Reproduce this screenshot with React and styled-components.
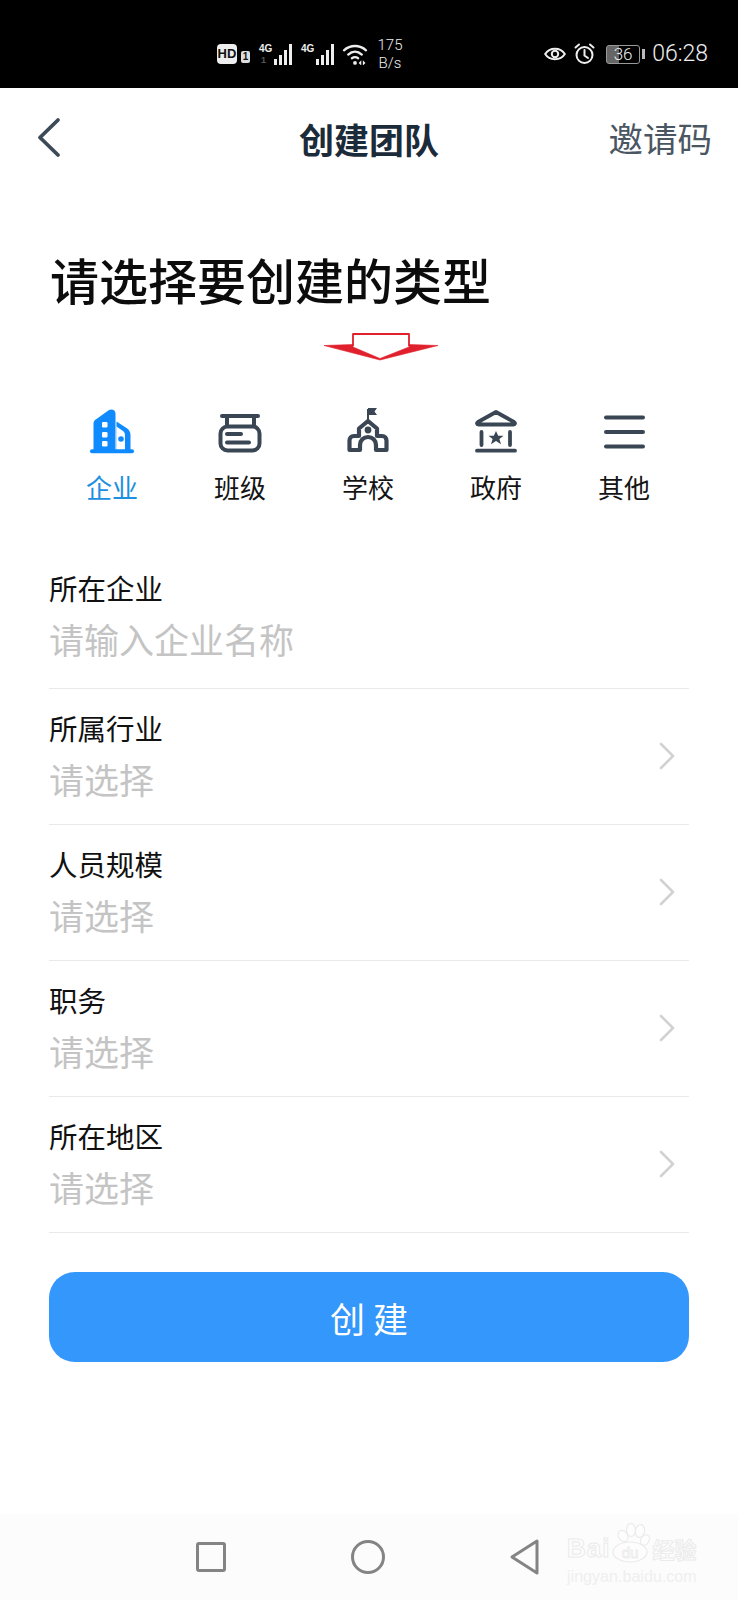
import React from 'react';
import styled, { createGlobalStyle } from 'styled-components';

const Global = createGlobalStyle`
  html, body { margin: 0; padding: 0; background: #fff; }
  body { font-family: "Noto Sans CJK SC", "Liberation Sans", sans-serif; }
`;

const types = [
  { key: 'company', label: '企业', active: true },
  { key: 'class', label: '班级' },
  { key: 'school', label: '学校' },
  { key: 'gov', label: '政府' },
  { key: 'other', label: '其他' },
];

const rows = ['所属行业', '人员规模', '职务', '所在地区'];

function TypeIcon({ name }) {
  if (name === 'company') {
    return (
      <svg width="48" height="48" viewBox="0 0 48 48">
        <path fill="#0f8bff" d="M5.500 44V16.500c0-2 1-3.500 3-4.500L21 3c3-1.500 6.500 0 6.500 3.500V44z" />
        <path fill="#0f8bff" d="M28.500 14.500L38.500 21c2.500 1.500 4 4 4 7V44H28.500z" />
        <path fill="#fff" d="M28.500 19.500L35 24c1.300.9 2 2.500 2 4.500V43H28.500z" />
        <rect x="2" y="42.200" width="44" height="4" rx="2" fill="#0f8bff" />
        <rect x="14" y="15" width="5.500" height="5.500" rx="1.200" fill="#fff" />
        <rect x="14" y="25" width="5.500" height="5.500" rx="1.200" fill="#fff" />
        <rect x="14" y="34" width="5.500" height="5.500" rx="1.200" fill="#fff" />
        <circle cx="33" cy="32" r="2.800" fill="#0f8bff" />
      </svg>
    );
  }
  if (name === 'class') {
    return (
      <svg width="48" height="48" viewBox="0 0 48 48" fill="none" stroke="#3a4654" strokeWidth="4" strokeLinecap="round">
        <path d="M6 9h36" />
        <path d="M11 9v10M38 9v10" />
        <rect x="4.500" y="19.500" width="39" height="24" rx="7" />
        <path d="M11 27h14M11 35.500h22" />
      </svg>
    );
  }
  if (name === 'school') {
    return (
      <svg width="48" height="48" viewBox="0 0 48 48" fill="none" stroke="#3a4654" strokeWidth="4.200" strokeLinejoin="round">
        <path d="M24 14L15 21.500V29H10c-3 0-4.500 2-4.500 4.500V43H16V38c0-4.500 3.500-8 8-8s8 3.500 8 8v5h10.500V33.500c0-2.500-1.500-4.500-4.500-4.500h-5V21.500z" />
        <path d="M24 14V2" strokeWidth="2" />
        <path fill="#3a4654" stroke="none" d="M24 1h9l-2.500 3.500L33 8h-9z" />
        <circle cx="24" cy="23" r="3.400" fill="#3a4654" stroke="none" />
      </svg>
    );
  }
  if (name === 'gov') {
    return (
      <svg width="48" height="48" viewBox="0 0 48 48" fill="none" stroke="#3a4654" strokeWidth="3.800" strokeLinecap="round" strokeLinejoin="round">
        <path d="M24 5L6 15c-1.500 1-1.200 2.500.5 2.500h35c1.700 0 2-1.500.5-2.500z" />
        <path d="M9.500 25v13M38 25v13M5 43.700h38" />
        <path fill="#3a4654" stroke="none" d="M24 24l2.200 4.700h5.300l-4.100 3.300 1.600 5.300-5-3.200-5 3.200 1.600-5.300-4.100-3.300h5.300z" />
      </svg>
    );
  }
  return (
    <svg width="48" height="48" viewBox="0 0 48 48" fill="none" stroke="#3a4654" strokeWidth="4" strokeLinecap="round">
      <path d="M6 10.500h37M6 25h37M6 39.500h37" />
    </svg>
  );
}

function Signal({ secondary }) {
  return (
    <SignalWrap>
      <SignalTag>4G</SignalTag>
      {secondary && <SignalSub>1</SignalSub>}
      <SignalBars>
        {[6, 10, 15, 21].map((h) => (
          <SignalBar key={h} style={{ height: h }} />
        ))}
      </SignalBars>
    </SignalWrap>
  );
}

export default function App() {
  return (
    <Page>
      <Global />
      <StatusBar>
        <StatusLeft>
          <HdBadge>HD</HdBadge>
          <SimBadge>1</SimBadge>
          <Signal secondary />
          <Signal />
          <svg width="26" height="22" viewBox="0 0 24 21" fill="none" stroke="#eee" strokeWidth="2.200" strokeLinecap="round">
            <path d="M1.500 7c6-5.500 15-5.500 21 0M5.500 11c4-3.500 9-3.500 13 0M9 14.500c2-1.300 4-1.300 6 0" />
            <circle cx="12" cy="19" r="1.800" fill="#eee" stroke="none" />
            <path fill="#eee" stroke="none" d="M18 16.500v5l-2.500-2.500zM19.500 16.500v5l2.500-2.500z" />
          </svg>
          <Speed>175<br />B/s</Speed>
        </StatusLeft>
        <StatusRight>
          <svg width="22" height="18" viewBox="0 0 22 18" fill="none" stroke="#eee" strokeWidth="2">
            <path d="M1.200 9C5.500 2 16.500 2 20.800 9 16.500 16 5.500 16 1.200 9z" />
            <circle cx="11" cy="9" r="3.200" />
          </svg>
          <svg width="21" height="22" viewBox="0 0 21 22" fill="none" stroke="#eee" strokeWidth="2" strokeLinecap="round">
            <circle cx="10.500" cy="12" r="8" />
            <path d="M10.500 7v5.500l3.500 2.500M1.500 4.500l3.500-3M19.500 4.500l-3.500-3" />
          </svg>
          <Battery>
            <BatteryBody>36</BatteryBody>
            <BatteryCap />
          </Battery>
          <Clock>06:28</Clock>
        </StatusRight>
      </StatusBar>

      <Header>
        <BackButton>
          <svg width="26" height="42" viewBox="0 0 26 42" fill="none" stroke="#3c4a58" strokeWidth="3.800" strokeLinecap="round" strokeLinejoin="round">
            <path d="M22 3L4 20.500 22 38" />
          </svg>
        </BackButton>
        <HeaderTitle>创建团队</HeaderTitle>
        <InviteLink>邀请码</InviteLink>
      </Header>

      <Heading>请选择要创建的类型</Heading>

      <ArrowRow>
        <svg width="118" height="30" viewBox="0 0 118 30">
          <path fill="none" stroke="#e0202c" strokeWidth="1.800" strokeLinejoin="round" d="M31 14V2h56v12" />
          <path fill="#e0202c" stroke="#e0202c" strokeWidth="0.600" strokeLinejoin="round" d="M2 13.500L31 12.500v2.500L58 26.500 87 15v-2.500l29 1L58 28z" />
        </svg>
      </ArrowRow>

      <TypeBar>
        {types.map((t) => (
          <TypeItem key={t.key}>
            <TypeIcon name={t.key} />
            <TypeLabel $active={t.active}>{t.label}</TypeLabel>
          </TypeItem>
        ))}
      </TypeBar>

      <Form>
        <FirstRow>
          <RowText>
            <RowLabel>所在企业</RowLabel>
            <RowValue>请输入企业名称</RowValue>
          </RowText>
        </FirstRow>
        {rows.map((r) => (
          <Row key={r}>
            <RowText>
              <RowLabel>{r}</RowLabel>
              <RowValue>请选择</RowValue>
            </RowText>
            <svg width="18" height="28" viewBox="0 0 18 28" fill="none" stroke="#d2d2d2" strokeWidth="2.600" strokeLinecap="round" strokeLinejoin="round">
              <path d="M3 2l12 12L3 26" />
            </svg>
          </Row>
        ))}
      </Form>

      <CreateButton>创 建</CreateButton>

      <NavBar>
        <svg width="32" height="32" viewBox="0 0 32 32" fill="none" stroke="#848484" strokeWidth="3" strokeLinejoin="round">
          <rect x="2.500" y="2.500" width="27" height="27" rx="1.500" />
        </svg>
        <svg width="34" height="38" viewBox="0 0 34 38" fill="none" stroke="#848484" strokeWidth="3">
          <circle cx="17" cy="19" r="15.500" />
        </svg>
        <svg width="32" height="38" viewBox="0 0 32 38" fill="none" stroke="#848484" strokeWidth="3" strokeLinejoin="round">
          <path d="M28 3v32L3 19z" />
        </svg>
        <Watermark>
          <WatermarkBrand>
            <WatermarkBai>Bai</WatermarkBai>
            <svg width="40" height="40" viewBox="0 0 40 40" fill="#fdfdfd" stroke="#ebebeb" strokeWidth="1.200">
              <ellipse cx="12" cy="13" rx="4.500" ry="6" transform="rotate(-30 12 13)" />
              <ellipse cx="20" cy="7" rx="4.500" ry="6.500" />
              <ellipse cx="29" cy="8" rx="4.500" ry="6.500" transform="rotate(10 29 8)" />
              <ellipse cx="34" cy="17" rx="4" ry="5.500" transform="rotate(30 34 17)" />
              <ellipse cx="19" cy="29" rx="17" ry="10" />
              <text x="19" y="35" fontSize="15" textAnchor="middle" fontFamily="Liberation Sans, sans-serif" strokeWidth="0.800">du</text>
            </svg>
            <WatermarkCn>经验</WatermarkCn>
          </WatermarkBrand>
          <WatermarkUrl>jingyan.baidu.com</WatermarkUrl>
        </Watermark>
      </NavBar>
    </Page>
  );
}

const Page = styled.div`
  width: 738px;
  height: 1600px;
  display: flex;
  flex-direction: column;
  background: #fff;
  overflow: hidden;
`;

const StatusBar = styled.div`
  height: 88px;
  flex: none;
  background: #000;
  display: flex;
  align-items: center;
  justify-content: space-between;
  padding: 20px 30px 0 217px;
  box-sizing: border-box;
  color: #eee;
`;

const StatusLeft = styled.div`
  display: flex;
  align-items: center;
  gap: 8px;
`;

const StatusRight = styled.div`
  display: flex;
  align-items: center;
  gap: 8px;
`;

const HdBadge = styled.div`
  width: 20px;
  height: 20px;
  border-radius: 4px;
  background: #eee;
  color: #111;
  font: 700 13px/20px "Liberation Sans", sans-serif;
  text-align: center;
`;

const SimBadge = styled.div`
  width: 9px;
  height: 12px;
  margin: 6px 0 0 -4px;
  border-radius: 2px;
  background: #ddd;
  color: #111;
  font: 700 10px/12px "Liberation Sans", sans-serif;
  text-align: center;
`;

const Speed = styled.div`
  width: 28px;
  margin-left: 0;
  font: 300 15px/18px "Roboto", sans-serif;
  text-align: center;
`;

const Battery = styled.div`
  display: flex;
  align-items: center;
  gap: 2px;
  margin-left: 3px;
`;

const BatteryBody = styled.div`
  width: 34px;
  height: 19px;
  box-sizing: border-box;
  border: 1px solid #999;
  border-radius: 3px;
  color: #eee;
  font: 300 17px/17px "Roboto", sans-serif;
  text-align: center;
  background: linear-gradient(90deg, #666 0 36%, transparent 36%);
`;

const BatteryCap = styled.div`
  width: 3px;
  height: 10px;
  background: #bbb;
`;

const Clock = styled.div`
  font: 300 23px/24px "Roboto", sans-serif;
  margin-left: -1px;
`;

const SignalWrap = styled.div`
  position: relative;
  width: 33px;
  height: 22px;
  margin-left: 1px;
  display: flex;
  justify-content: flex-end;
  align-items: flex-end;
`;

const SignalTag = styled.span`
  position: absolute;
  left: 0;
  top: 0;
  color: #eee;
  font: 700 10px/11px "Liberation Sans", sans-serif;
`;

const SignalSub = styled.span`
  position: absolute;
  left: 2px;
  bottom: 0;
  color: #555;
  font: 700 9px/10px "Liberation Sans", sans-serif;
`;

const SignalBars = styled.div`
  display: flex;
  align-items: flex-end;
  gap: 2px;
`;

const SignalBar = styled.div`
  width: 3px;
  background: #eee;
`;

const Header = styled.div`
  position: relative;
  height: 100px;
  flex: none;
  display: flex;
  align-items: center;
  justify-content: center;
`;

const BackButton = styled.div`
  position: absolute;
  left: 36px;
  top: 29px;
  line-height: 0;
`;

const HeaderTitle = styled.div`
  font-size: 35px;
  font-weight: 700;
  color: #1c2b39;
`;

const InviteLink = styled.div`
  position: absolute;
  right: 26px;
  top: 25px;
  font-size: 34.500px;
  line-height: 48px;
  color: #4a5662;
`;

const Heading = styled.h1`
  margin: 56px 0 0 50px;
  font-size: 49px;
  line-height: 70px;
  font-weight: 500;
  color: #0c0c0c;
`;

const ArrowRow = styled.div`
  margin-top: 18px;
  height: 30px;
  padding-left: 322px;
  line-height: 0;
`;

const TypeBar = styled.div`
  margin-top: 45px;
  padding: 0 48px;
  display: grid;
  grid-template-columns: repeat(5, 128px);
`;

const TypeItem = styled.div`
  display: flex;
  flex-direction: column;
  align-items: center;
`;

const TypeLabel = styled.div`
  margin-top: 14px;
  font-size: 26px;
  line-height: 36px;
  color: ${(p) => (p.$active ? '#1d8fe0' : '#141414')};
`;

const Form = styled.div`
  margin: 41px 49px 0;
`;

const Row = styled.div`
  height: 136px;
  box-sizing: border-box;
  display: flex;
  align-items: center;
  justify-content: space-between;
  padding: 0 13px 2px 0;
  border-bottom: 1px solid #e9e9e9;
`;

const FirstRow = styled(Row)`
  height: 143px;
  padding-bottom: 4px;
`;

const RowText = styled.div`
  display: flex;
  flex-direction: column;
`;

const RowLabel = styled.div`
  font-size: 28.500px;
  line-height: 40px;
  color: #111;
`;

const RowValue = styled.div`
  font-size: 35px;
  line-height: 48px;
  margin-top: 7px;
  color: #c4c4c4;
`;

const CreateButton = styled.div`
  margin: 39px 49px 0;
  height: 90px;
  border-radius: 26px;
  background: #3397fb;
  color: #fff;
  font-size: 35px;
  display: flex;
  align-items: center;
  justify-content: center;
`;

const NavBar = styled.div`
  position: relative;
  margin-top: auto;
  height: 86px;
  background: #fcfcfc;
  display: flex;
  align-items: center;
  padding-left: 195px;
  gap: 124px;
`;

const Watermark = styled.div`
  position: absolute;
  left: 567px;
  top: 9px;
  color: #efefef;
`;

const WatermarkBrand = styled.div`
  display: flex;
  align-items: flex-end;
  gap: 1px;
`;

const WatermarkBai = styled.span`
  color: #fdfdfd;
  -webkit-text-stroke: 1px #ebebeb;
  font: 700 26px/30px "Liberation Sans", sans-serif;
  letter-spacing: 1px;
`;

const WatermarkCn = styled.span`
  color: #fdfdfd;
  -webkit-text-stroke: 1px #ebebeb;
  font: 700 22px/30px "Noto Sans CJK SC", sans-serif;
`;

const WatermarkUrl = styled.div`
  margin-top: 5px;
  font: 400 16.100px/16px "Liberation Sans", sans-serif;
`;
